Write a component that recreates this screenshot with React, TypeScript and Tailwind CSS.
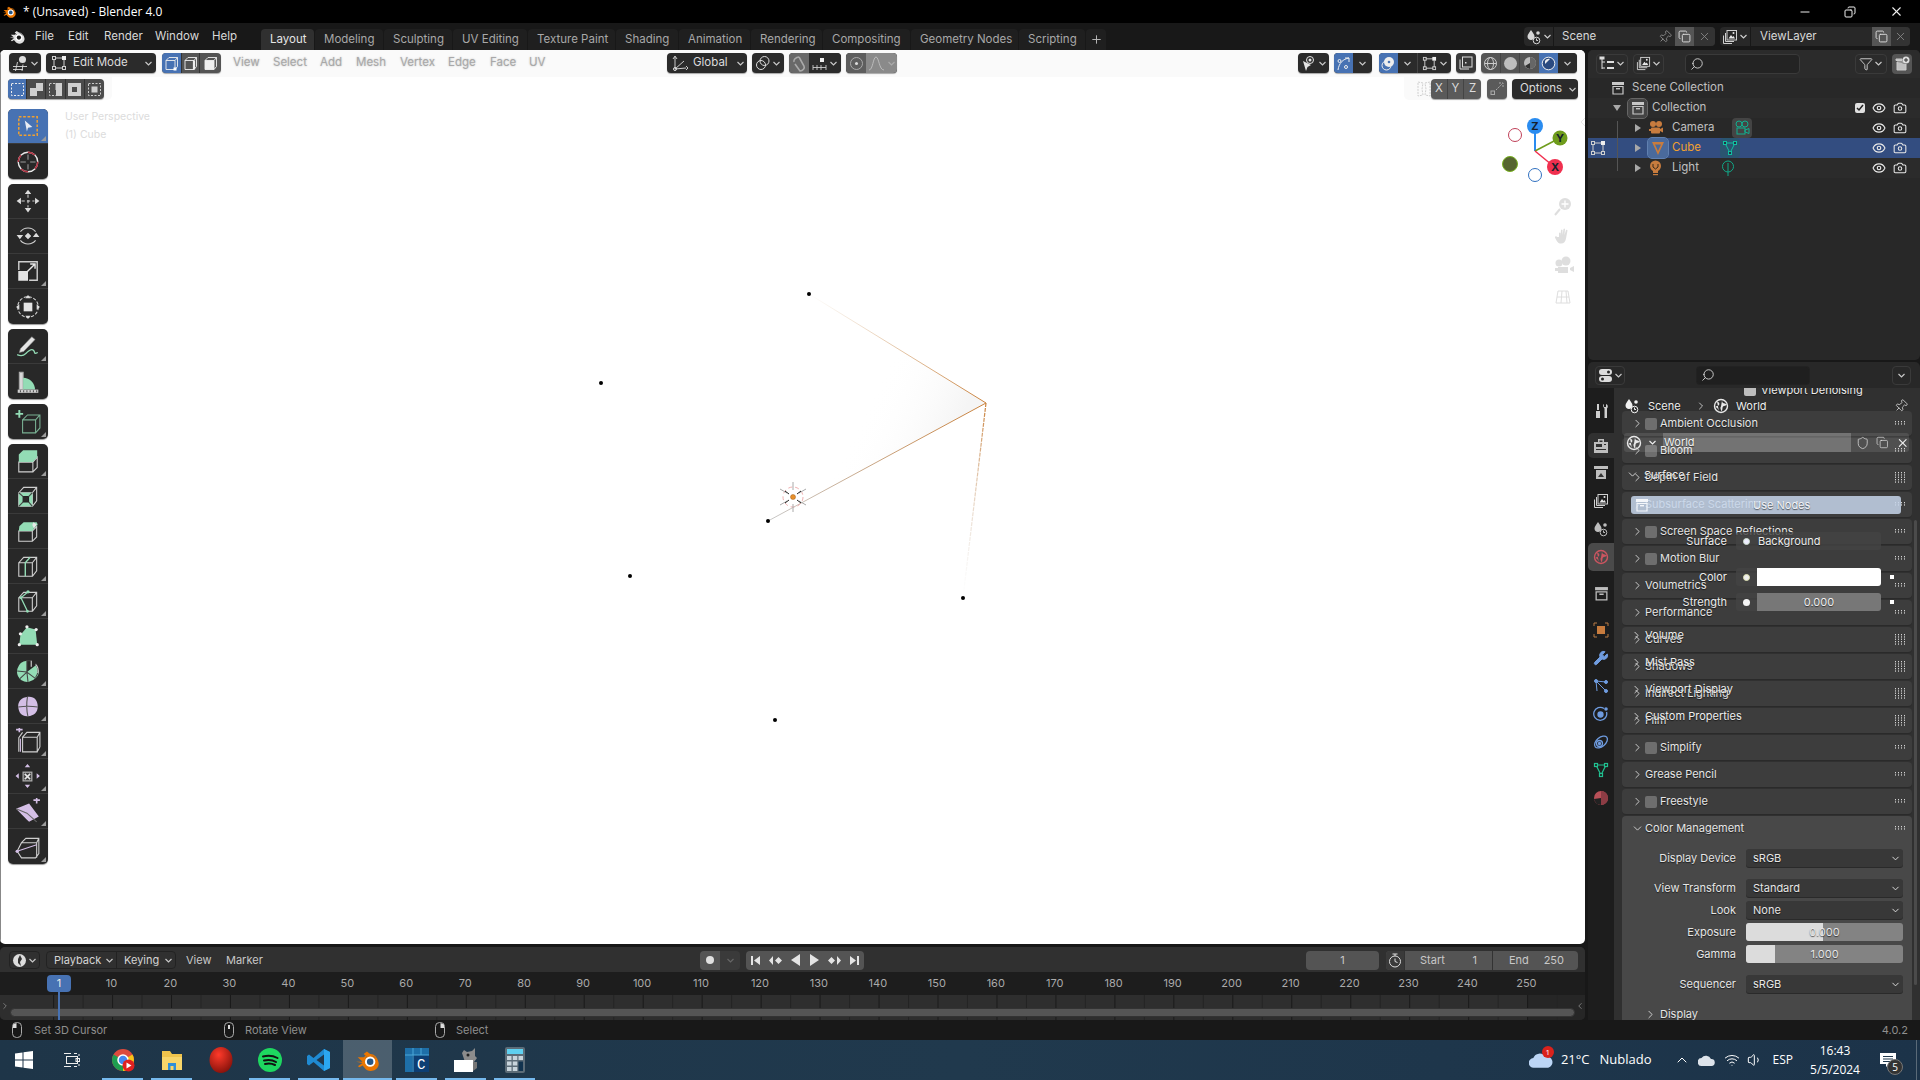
import React from 'react';
import { Camera, ChevronDown, ChevronRight, ChevronUp, Copy, Eye, Filter, Minus, Pin, Plus, Search, Shield, Volume1, Wifi, Wrench, X } from 'lucide-react';

const shadow = '[text-shadow:0_1px_1px_#0009]';

const Chev = ({ className = 'text-[#cfcfcf]' }: { className?: string }) => (
    <svg width="9" height="9" viewBox="0 0 9 9" fill="none" className={`shrink-0 ${className}`}>
        <path d="M1.5 3l3 3 3-3" stroke="currentColor" strokeWidth="1.2" />
    </svg>
);

const BlenderLogo = ({ size = 14, ring = '#ea7600', eye = '#265787', arm = '#ea7600' }: { size?: number; ring?: string; eye?: string; arm?: string }) => (
    <svg width={size} height={size} viewBox="0 0 24 24">
        <path d="M1 13.5h6L2.5 9.5h9L8 6.5l3-2.3 9 6.8c3 3 2.4 7.5-1 9.8-3.5 2.3-8 1.6-10.2-1.6L7 17l-2.8 1.8-1.6-1L7 14.8z" fill={arm} />
        <circle cx="14" cy="13.5" r="4.8" fill="#fff" />
        <circle cx="14" cy="13.5" r="3" fill={eye} />
        <circle cx="14" cy="13.5" r="6.5" fill="none" stroke={ring} strokeWidth="1" />
    </svg>
);

const MeshIcon = ({ size = 16 }: { size?: number }) => (
    <svg width={size} height={size} viewBox="0 0 16 16" fill="none" stroke="#cfcfcf">
        <path d="M4 3h8M3 4v8M13 5v7M4 13h8" />
        <rect x="1.5" y="1.5" width="3" height="3" />
        <rect x="1.5" y="11.5" width="3" height="3" />
        <rect x="11.5" y="11.5" width="3" height="3" />
        <rect x="11" y="1" width="4" height="4" fill="#eee" stroke="none" />
    </svg>
);

const BoxIcon = ({ color = '#c8c8c8', size = 14 }: { color?: string; size?: number }) => (
    <svg width={size} height={size} viewBox="0 0 14 14">
        <rect x="1" y="1" width="12" height="3" fill={color} />
        <path d="M2 5.5h10V13H2z" fill="none" stroke={color} strokeWidth="1.2" />
        <rect x="5" y="7" width="4" height="1.4" fill={color} />
    </svg>
);

const SceneIcon = ({ color = '#d5d5d5' }: { color?: string }) => (
    <svg width="16" height="16" viewBox="0 0 16 16" fill={color}>
        <path d="M5 1c2 3 3.5 4.5 3.5 6.5S7 11 5 11 1.5 9.5 1.5 7.5 3 4 5 1z" />
        <circle cx="12" cy="4" r="1.8" />
        <circle cx="10.5" cy="11.5" r="3.3" fill="none" stroke={color} />
        <path d="M10.5 9.5v2h1.5" fill="none" stroke={color} />
    </svg>
);

const LayerIcon = ({ size = 16 }: { size?: number }) => (
    <svg width={size} height={size} viewBox="0 0 16 16" fill="none" stroke="#d0d0d0">
        <rect x="5" y="1.5" width="9.5" height="9.5" />
        <path d="M3.5 4v8.5H12M1.5 6.5v8H10" />
        <path d="M6.5 9.5l2.5-3.5 1.5 2 1-1 1.5 2.5z" fill="#e8e8e8" stroke="none" />
        <circle cx="11.5" cy="4" r="1" fill="#e8e8e8" stroke="none" />
    </svg>
);

const WorldIcon = ({ color = '#e8e8e8', size = 16 }: { color?: string; size?: number }) => (
    <svg width={size} height={size} viewBox="0 0 16 16">
        <circle cx="8" cy="8" r="6.5" fill="none" stroke={color} strokeWidth="1.4" />
        <path d="M4 3.5c2 .5 3 2 2 3.5S3 7.5 2.5 9c2 1 3 2 3.5 4.5M9 2.5c0 2 1 3 3 3l2 1c-1 1.5-3 1-4 2s0 3-1.5 5C7.5 11 7 9.5 8 8.5" fill={color} />
    </svg>
);

// ---- toolbar drawings ----
const MINT = '#93dcb5';
const LILAC = '#d4bfe6';
const WIRE = '#cfcfcf';
const cube = 'M3.5 9h12.5v12.5H3.5zM3.5 9l4.5-5h12v12.5l-4 5M16 9l4-5';

const Ico = ({ children }: { children: React.ReactNode }) => (
    <svg width="26" height="26" viewBox="0 0 24 24" fill="none" stroke={WIRE} strokeWidth="1">
        {children}
    </svg>
);

const tools: { corner?: boolean; active?: boolean; art: React.ReactNode }[][] = [
    [
        {
            active: true,
            corner: true,
            art: (
                <Ico>
                    <rect x="3.5" y="3.5" width="17" height="17" stroke="#f0a030" strokeWidth="1.4" strokeDasharray="2.5 1.5" />
                    <path d="M9 7l7 6-4 .5-1 3.5z" fill="#e8ecf4" stroke="none" />
                </Ico>
            ),
        },
        {
            art: (
                <Ico>
                    <circle cx="12" cy="12" r="9" stroke="#e8e8e8" strokeWidth="1.3" />
                    <circle cx="12" cy="12" r="9" stroke="#b03040" strokeWidth="1.4" strokeDasharray="7 7" />
                    <path d="M12 5v5M12 14v5M5 12h5M14 12h5" stroke="#999" />
                </Ico>
            ),
        },
    ],
    [
        {
            art: (
                <Ico>
                    <path d="M12 6v12M6 12h12" strokeDasharray="3 2" />
                    <path d="M12 1.5l3 4h-6zM12 22.5l3-4h-6zM1.5 12l4-3v6zM22.5 12l-4-3v6z" fill="#dcdcdc" stroke="none" />
                </Ico>
            ),
        },
        {
            art: (
                <Ico>
                    <path d="M5 8a9 9 0 0 1 14 0M19 16a9 9 0 0 1-14 0" />
                    <path d="M12 9l3 3-3 3-3-3zM1.5 11h6l-3 4zM16.5 13h6l-3-4z" fill="#dcdcdc" stroke="none" />
                </Ico>
            ),
        },
        {
            corner: true,
            art: (
                <Ico>
                    <path d="M3.5 11V3.5h17v17H13" strokeWidth="1.3" />
                    <rect x="3" y="12" width="9" height="9" fill="#e4e4e4" stroke="none" />
                    <path d="M11 13l7-7M14 5.5h4.5V10" stroke="#e8e8e8" strokeWidth="1.3" />
                </Ico>
            ),
        },
        {
            art: (
                <Ico>
                    <circle cx="12" cy="12" r="9.5" strokeDasharray="3 1.5" />
                    <rect x="8" y="8" width="8" height="8" fill="#e4e4e4" stroke="none" />
                    <path d="M12 1l2.5 3h-5zM12 23l2.5-3h-5zM1 12l3-2.5v5zM23 12l-3-2.5v5z" fill="#dcdcdc" stroke="none" />
                </Ico>
            ),
        },
    ],
    [
        {
            corner: true,
            art: (
                <Ico>
                    <path d="M5 14.5L15.5 3.5l3 2.5L8 17l-4 1z" fill="#e4e4e4" stroke="#888" strokeWidth=".6" />
                    <path d="M2 20c4 2 6 1 8-1s5-5 7-3 0 4 4 2" stroke={MINT} strokeWidth="1.2" />
                </Ico>
            ),
        },
        {
            art: (
                <Ico>
                    <path d="M4 19V3h3.5v16" fill="#d8d8d8" stroke="#aaa" />
                    <path d="M7.5 8c6 0 11 5 11 11h-11z" fill={MINT} stroke="none" />
                    <rect x="2.5" y="19" width="19" height="3" fill="#d0d0d0" stroke="none" />
                    <path d="M5 21.5v-2M8 21.5v-2M11 21.5v-2M14 21.5v-2M17 21.5v-2M20 21.5v-2" stroke="#555" />
                </Ico>
            ),
        },
    ],
    [
        {
            corner: true,
            art: (
                <Ico>
                    <path d="M7 10h12v12H7zM7 10l4.5-4.5h11.5v12l-4 4.5M19 10l4-4.5" stroke={MINT} strokeOpacity=".75" />
                    <path d="M4 1v7M.5 4.5h7" stroke={MINT} strokeWidth="1.8" />
                </Ico>
            ),
        },
    ],
    [
        {
            corner: true,
            art: (
                <Ico>
                    <path d="M3.5 13h13v9h-13zM16.5 13l4-4.5v9.5l-4 4" />
                    <path d="M3.5 13V6l4-4h13v6.5l-4 4.5z" fill={MINT} stroke="none" />
                </Ico>
            ),
        },
        {
            art: (
                <Ico>
                    <path d={cube} />
                    <path d="M3.5 9H16v12.5H3.5z" fill={MINT} stroke="none" />
                    <rect x="7.5" y="12.5" width="5" height="5" fill="#2a2a2a" stroke="#222" />
                    <path d="M3.5 9l4 3.5M16 9l-3.5 3.5M3.5 21.5l4-4M16 21.5l-3.5-4" stroke="#444" />
                </Ico>
            ),
        },
        {
            art: (
                <Ico>
                    <path d="M3.5 12H16l4-4v9.5l-4 4H3.5zM16 12v9.5" />
                    <path d="M3.5 12L4 7.5 8 4h12l1 2-3.5 3.5L16 12z" fill={MINT} stroke="none" />
                    <path d="M17 4l3 2-2.5 3.5-1.5-3z" fill="#e8e8e8" stroke="none" />
                </Ico>
            ),
        },
        {
            corner: true,
            art: (
                <Ico>
                    <path d={cube} />
                    <path d="M9.5 21.5V9l4.5-5" stroke={MINT} strokeWidth="1.3" />
                </Ico>
            ),
        },
        {
            corner: true,
            art: (
                <Ico>
                    <path d={cube} />
                    <path d="M5.5 9l6-5 1 0M5.5 9l6 12.5" stroke={MINT} strokeWidth="1.2" />
                    <circle cx="12" cy="3.5" r="1.5" fill={MINT} stroke="none" />
                    <circle cx="5.5" cy="9" r="1.3" fill={MINT} stroke="none" />
                    <circle cx="11.5" cy="21.5" r="1.3" fill={MINT} stroke="none" />
                </Ico>
            ),
        },
        {
            art: (
                <Ico>
                    <path d="M4 20l1-9 6-7 8 2 1.5 14z" fill={MINT} stroke="none" />
                    <circle cx="4" cy="20" r="1.5" fill="#eee" stroke="none" />
                    <circle cx="5" cy="10" r="1.5" fill="#eee" stroke="none" />
                    <circle cx="11" cy="3.5" r="1.5" fill="#eee" stroke="none" />
                    <circle cx="19.5" cy="6" r="1.5" fill="#eee" stroke="none" />
                    <circle cx="20.5" cy="20" r="1.5" fill="#eee" stroke="none" />
                </Ico>
            ),
        },
        {
            corner: true,
            art: (
                <Ico>
                    <path d="M11 13L11 2.5A10 10 0 0 0 6 20.5 10 10 0 0 0 19 18.5c1.5-1 3-3 3-6C21 10 20 8.5 19 7z" fill={MINT} stroke="none" />
                    <path d="M11 13V2.5h4v6M11 13L2 12M11 13L4.5 19M11 13l1 9M11 13l8 6M19 5c3 3 3 9 0 13" stroke="#444" />
                    <path d="M15 2.5V8M19 6c2 2 3 5 2 8" stroke={WIRE} />
                </Ico>
            ),
        },
        {
            corner: true,
            art: (
                <Ico>
                    <path d="M3 13c-.5-5 3-9 9-9.5s9 3.5 9 9-3.5 8.5-9 9-8.5-3-9-8.5z" fill={LILAC} stroke="none" />
                    <path d="M3 13c6-1 12-1 18 0M11.5 3.5c-1 6-1 12 .5 18.500" stroke="#555" />
                </Ico>
            ),
        },
        {
            corner: true,
            art: (
                <Ico>
                    <path d="M7 8.5h13.5v13.5H7zM7 8.5L11 4h12v13.5l-2.5 4.5M20.5 8.5L23 4" />
                    <path d="M3.5 22V9l3.5-5" />
                    <path d="M5 22V10" stroke={LILAC} />
                    <path d="M1 1.5h6M4 -1v5" stroke={LILAC} strokeWidth="1.5" />
                </Ico>
            ),
        },
        {
            corner: true,
            art: (
                <Ico>
                    <rect x="7.5" y="8.5" width="8" height="8" strokeWidth="1.2" stroke="#aaa" fill="#444" />
                    <path d="M9 10l5 5M14 10l-5 5" stroke="#e8e8e8" strokeWidth="1.5" />
                    <path d="M11.5 1l2.5 3h-5zM11.5 23l2.5-3h-5zM.5 12l3-2.5v5zM23 12l-3-2.5v5z" fill={LILAC} stroke="none" />
                </Ico>
            ),
        },
        {
            corner: true,
            art: (
                <Ico>
                    <path d="M1 10l12-5 9 12-9 5-2-2z" fill={LILAC} stroke="none" />
                    <path d="M1 10l10 4 9 8" stroke="#666" />
                    <path d="M17 2h6M20 -1v6" stroke={LILAC} strokeWidth="1.5" />
                </Ico>
            ),
        },
        {
            corner: true,
            art: (
                <Ico>
                    <path d="M6 8l4-4h12v14l-3 4H6l-4-6zM6 8h14v14M20 8l2-4" />
                    <path d="M2 16l18-6" stroke={LILAC} />
                    <circle cx="2" cy="16" r="1.5" fill={LILAC} stroke="none" />
                </Ico>
            ),
        },
    ],
];

const Toolbar = () => (
    <div className="absolute left-[8px] top-[59px] flex w-[40px] flex-col gap-[5px]">
        {tools.map((group, g) => (
            <div key={g} className="flex flex-col overflow-hidden rounded-[5px] bg-[#282828] shadow-[0_1px_1px_#0006]">
                {group.map((tool, i) => (
                    <div
                        key={i}
                        className={`relative flex h-[35px] items-center justify-center border-b border-[#3a3a3a] last:border-b-0 ${tool.active ? 'bg-[#4772b3]' : ''}`}
                    >
                        {tool.art}
                        {tool.corner && (
                            <span className="absolute bottom-[2px] right-[2px] h-0 w-0 border-b-[5px] border-l-[5px] border-b-[#9a9a9a] border-l-transparent" />
                        )}
                    </div>
                ))}
            </div>
        ))}
    </div>
);

// ---- viewport canvas ----
const Scene3D = () => (
    <svg className="absolute inset-0" width="1585" height="894" viewBox="0 50 1585 894">
        <defs>
            <linearGradient id="e1" gradientUnits="userSpaceOnUse" x1="809" y1="294" x2="986" y2="403">
                <stop offset="0" stopColor="#cda070" stopOpacity="0" />
                <stop offset="1" stopColor="#c9803a" />
            </linearGradient>
            <linearGradient id="e2" gradientUnits="userSpaceOnUse" x1="768" y1="521" x2="986" y2="403">
                <stop offset="0" stopColor="#c8c8c8" />
                <stop offset="1" stopColor="#c9803a" />
            </linearGradient>
            <linearGradient id="e3" gradientUnits="userSpaceOnUse" x1="986" y1="403" x2="963" y2="598">
                <stop offset="0" stopColor="#c9803a" />
                <stop offset="1" stopColor="#d8d8d8" stopOpacity="0" />
            </linearGradient>
            <linearGradient id="f1" gradientUnits="userSpaceOnUse" x1="960" y1="420" x2="880" y2="380">
                <stop offset="0" stopColor="#f5f5f5" />
                <stop offset="1" stopColor="#fff" stopOpacity="0" />
            </linearGradient>
        </defs>
        <path d="M986 403L809 294 768 521z" fill="url(#f1)" />
        <path d="M809 294L986 403" stroke="url(#e1)" />
        <path d="M768 521L986 403" stroke="url(#e2)" />
        <path d="M986 403L963 598" stroke="url(#e3)" strokeDasharray="4 1" strokeWidth="1.2" />
        {[
            [809, 294],
            [601, 383],
            [768, 521],
            [630, 576],
            [963, 598],
            [775, 720],
        ].map(([x, y]) => (
            <circle key={x} cx={x} cy={y} r="2" fill="#000" />
        ))}
        {/* 3D cursor */}
        <circle cx="793" cy="497" r="10" fill="none" stroke="#f0b0b0" strokeDasharray="4 3" />
        <path d="M793 482v8M793 504v8M780 489l7 4M799 501l7 4M780 505l7-4M799 493l7-4" stroke="#aaa" />
        <path d="M785 491l4 3M797 500l4 3M785 503l4-3M797 494l4-3" stroke="#222" />
        <circle cx="793" cy="497" r="2.5" fill="#e8902a" stroke="#a06020" strokeWidth=".5" />
        {/* navigation gizmo */}
        <path d="M1535 151V130" stroke="#2a8cf0" strokeWidth="2" />
        <path d="M1535 151L1556 140" stroke="#6f9c1c" strokeWidth="1.5" />
        <path d="M1535 151L1552 165" stroke="#f0304f" strokeWidth="1.5" />
        <circle cx="1515" cy="135" r="6.5" fill="#fff" stroke="#c04058" />
        <circle cx="1510" cy="164" r="7.5" fill="#566530" stroke="#78b020" />
        <circle cx="1535" cy="175" r="6.5" fill="#fff" stroke="#3070c0" />
        <circle cx="1535" cy="126" r="8" fill="#2a8cf0" />
        <circle cx="1560" cy="138" r="7.5" fill="#6f9c1c" />
        <circle cx="1555" cy="167" r="8" fill="#f0304f" />
        <g fontFamily="Inter" fontSize="11" fontWeight="700" fill="#16202c" textAnchor="middle">
            <text x="1535" y="130">Z</text>
            <text x="1560" y="142">Y</text>
            <text x="1555" y="171">X</text>
        </g>
        <path d="M1585 118l-4 4 4 4" fill="none" stroke="#e8e8e8" strokeWidth="1" />
        {/* zoom / pan / camera / ortho */}
        <g fill="#dedede" stroke="#dedede">
            <circle cx="1565" cy="204" r="6" stroke="none" />
            <path d="M1560 209l-5 6" strokeWidth="2" fill="none" />
            <path d="M1565 200.5v7M1561.5 204h7" stroke="#fff" strokeWidth="1.3" fill="none" />
            <path transform="translate(1 3)" d="M1558 234v-4a1 1 0 0 1 1.5 0v3l.5-6a1 1 0 0 1 1.5 0v5l1-6a1 1 0 0 1 1.5 0l-.5 6 1.5-5a1 1 0 0 1 1.5.5l-1.5 8c-.5 3-2 5-5 5s-4-2-6-6a1 1 0 0 1 2-.5z" stroke="none" />
            <circle cx="1559" cy="263" r="3.5" stroke="none" />
            <circle cx="1566" cy="261" r="4.5" stroke="none" />
            <rect x="1558" y="267" width="10" height="6" stroke="none" />
            <path d="M1570 268l4-2v6l-4-2zM1555 268h3v3h-3z" stroke="none" />
            <path d="M1558 291h10l2 12h-14zM1562 291l-1 12M1566 291l1 12M1557 297h12" fill="none" strokeWidth="1" />
        </g>
    </svg>
);

// ---- top bars ----
const menus = [
    { t: 'File', c: 'w-[33px]' },
    { t: 'Edit', c: 'w-[36px]' },
    { t: 'Render', c: 'w-[51px]' },
    { t: 'Window', c: 'w-[57px]' },
    { t: 'Help', c: 'w-[49px]' },
];

const workspaces = [
    { t: 'Layout', c: 'w-[53px] bg-[#303030] text-[#e6e6e6]' },
    { t: 'Modeling', c: 'w-[68px]' },
    { t: 'Sculpting', c: 'w-[68px]' },
    { t: 'UV Editing', c: 'w-[74px]' },
    { t: 'Texture Paint', c: 'w-[87px]' },
    { t: 'Shading', c: 'w-[62px]' },
    { t: 'Animation', c: 'w-[71px]' },
    { t: 'Rendering', c: 'w-[71px]' },
    { t: 'Compositing', c: 'w-[87px]' },
    { t: 'Geometry Nodes', c: 'w-[107px]' },
    { t: 'Scripting', c: 'w-[66px]' },
];

const TitleBar = () => (
    <div className="flex h-[23px] shrink-0 items-center bg-black font-['Open_Sans',sans-serif] text-[12px] text-white">
        <span className="ml-[2px] flex w-[21px]">
            <BlenderLogo size={15} />
        </span>
        <span>* (Unsaved) - Blender 4.0</span>
        <div className="ml-auto flex items-center text-[#f0f0f0]">
            <span className="flex w-[45px] justify-center"><Minus size={14} strokeWidth={1.7} /></span>
            <span className="flex w-[45px] justify-center">
                <Copy size={12} strokeWidth={2} className="-scale-x-100" />
            </span>
            <span className="flex w-[48px] justify-center"><X size={15} strokeWidth={1.7} /></span>
        </div>
    </div>
);

const SmallBtn = ({ className = '', children }: { className?: string; children: React.ReactNode }) => (
    <span className={`flex h-full items-center justify-center ${className}`}>{children}</span>
);

const TopBar = () => (
    <div className="flex h-[27px] shrink-0 bg-[#181818] font-['Inter',sans-serif] text-[11.5px]">
        <div className="flex w-[261px] items-center pl-[9px] text-[#d8d8d8]">
            <span className="mr-[9px] flex w-[17px]">
                <BlenderLogo size={17} ring="#e0e0e0" eye="#181818" arm="#e0e0e0" />
            </span>
            {menus.map((m) => (
                <span key={m.t} className={m.c}>{m.t}</span>
            ))}
        </div>
        <div className="flex items-end">
            {workspaces.map((w) => (
                <span
                    key={w.t}
                    className={`mr-px flex h-[21px] items-center justify-start rounded-t-[4px] pl-[9px] ${w.c.includes('bg-') ? w.c : `${w.c} bg-[#1f1f1f] text-[#a8a8a8]`}`}
                >
                    {w.t}
                </span>
            ))}
            <span className="flex h-[21px] w-[20px] items-center justify-center rounded-t-[4px] bg-[#1f1f1f] text-[#b8b8b8]">
                <Plus size={13} strokeWidth={1.8} />
            </span>
        </div>
        <div className="ml-auto flex items-center gap-[5px] pr-[10px]">
            <div className="flex h-[19px] w-[191px] items-center overflow-hidden rounded-[4px] bg-[#282828] text-[#d8d8d8]">
                <SmallBtn className="w-[30px] gap-px border-r border-[#181818]"><SceneIcon /><Chev /></SmallBtn>
                <span className="ml-[8px] flex-1">Scene</span>
                <Pin size={14} strokeWidth={1.6} className="mr-[3px] rotate-45 text-[#888]" />
                <SmallBtn className="w-[19px] bg-[#555]"><Copy size={13} strokeWidth={1.8} /></SmallBtn>
                <SmallBtn className="w-[21px] bg-[#333] text-[#888]"><X size={13} strokeWidth={1.6} /></SmallBtn>
            </div>
            <div className="flex h-[19px] w-[190px] items-center overflow-hidden rounded-[4px] bg-[#282828] text-[#d8d8d8]">
                <SmallBtn className="w-[31px] gap-px border-r border-[#181818]"><LayerIcon /><Chev /></SmallBtn>
                <span className="ml-[9px] flex-1">ViewLayer</span>
                <SmallBtn className="w-[19px] bg-[#555]"><Copy size={13} strokeWidth={1.8} /></SmallBtn>
                <SmallBtn className="w-[19px] bg-[#333] text-[#888]"><X size={13} strokeWidth={1.6} /></SmallBtn>
            </div>
        </div>
    </div>
);

// ---- viewport header ----
const Dark = ({ className = '', children }: { className?: string; children?: React.ReactNode }) => (
    <div className={`flex h-[20px] items-center overflow-hidden rounded-[4px] bg-[#2b2b2b] text-[#dcdcdc] shadow-[0_1px_1px_#0005] ${className}`}>
        {children}
    </div>
);

const vmenus = [
    { t: 'View', c: 'w-[40px]' },
    { t: 'Select', c: 'w-[47px]' },
    { t: 'Add', c: 'w-[36px]' },
    { t: 'Mesh', c: 'w-[44px]' },
    { t: 'Vertex', c: 'w-[48px]' },
    { t: 'Edge', c: 'w-[42px]' },
    { t: 'Face', c: 'w-[39px]' },
    { t: 'UV', c: 'w-[138px]' },
];

const SelectCube = ({ mode }: { mode: 0 | 1 | 2 }) => (
    <svg width="15" height="15" viewBox="0 0 15 15" fill="none" stroke="#eee">
        <path d="M2 4.5h9v9H2zM2 4.5L5 1.5h8.5v9l-2.5 3M11 4.5l2.5-3" strokeWidth=".9" />
        {mode === 0 && <rect x="9.5" y="11.5" width="3" height="3" fill="#fff" stroke="none" />}
        {mode === 1 && <path d="M11 4.5v9" strokeWidth="2.2" />}
        {mode === 2 && <rect x="2" y="4.5" width="9" height="9" fill="#eee" stroke="none" />}
    </svg>
);

const Caret = () => <Chev className="text-[#c8c8c8]" />;

const ViewportHeader = () => (
    <div className="flex h-[27px] shrink-0 items-start rounded-t-[5px] bg-[#fafafa] pl-[9px] pr-[8px] pt-[3px] font-['Inter',sans-serif] text-[11.5px]">
        <Dark className="w-[32px] justify-center gap-px">
            <svg width="17" height="17" viewBox="0 0 17 17" fill="none" stroke="#ddd">
                <path d="M1 11.5h14M1 14.5h10M5.5 7l-2 9M11 9.5l-1 6.5" strokeWidth=".9" />
                <circle cx="10.5" cy="4.5" r="3.5" fill="#ddd" stroke="none" />
            </svg>
            <Caret />
        </Dark>
        <Dark className="ml-[5px] w-[110px] pl-[5px]">
            <MeshIcon />
            <span className="ml-[6px] flex-1">Edit Mode</span>
            <span className="mr-[3px]"><Caret /></span>
        </Dark>
        <Dark className="ml-[6px] w-[59px] bg-[#545454]">
            <SmallBtn className="w-[19px] bg-[#4772b3]"><SelectCube mode={0} /></SmallBtn>
            <SmallBtn className="w-[19px] border-x border-[#333]"><SelectCube mode={1} /></SmallBtn>
            <SmallBtn className="w-[21px]"><SelectCube mode={2} /></SmallBtn>
        </Dark>
        <div className="ml-[12px] flex h-[20px] items-center text-[#a8a8a8] [text-shadow:0_0_2px_#bbb]">
            {vmenus.map((m) => (
                <span key={m.t} className={m.c}>{m.t}</span>
            ))}
        </div>
        <Dark className="w-[80px] pl-[4px]">
            <svg width="18" height="16" viewBox="0 0 18 16" fill="none" stroke="#ddd">
                <path d="M4 14V2M4 14l11-1M4 14L13 6M2 4l2-3 2 3M15 11l2 2-2 2" strokeWidth=".9" />
                <circle cx="4" cy="14" r="1.5" />
            </svg>
            <span className="ml-[4px] flex-1">Global</span>
            <span className="mr-[2px]"><Caret /></span>
        </Dark>
        <Dark className="ml-[5px] w-[32px] justify-center gap-px">
            <svg width="16" height="16" viewBox="0 0 16 16" fill="none" stroke="#ddd">
                <circle cx="9.5" cy="6" r="4.5" />
                <circle cx="6" cy="10" r="4.5" />
            </svg>
            <Caret />
        </Dark>
        <Dark className="ml-[5px] w-[52px]">
            <SmallBtn className="w-[20px] bg-[#696969]">
                <svg width="15" height="17" viewBox="0 0 15 17" fill="none" stroke="#aaa" strokeWidth="1.6">
                    <path d="M3 9l5 7c3 0 5-3 4-5L7 2M7 2C4 2 1 5 2 7" />
                </svg>
            </SmallBtn>
            <SmallBtn className="flex-1 gap-[2px] bg-[#2b2b2b]">
                <svg width="15" height="15" viewBox="0 0 15 15" stroke="#ccc" fill="none">
                    <path d="M1 9v5M5 9v5M9 9v5M14 9v5M1 11.5h13" strokeWidth=".9" />
                    <rect x="8" y="2" width="4" height="4" fill="#eee" stroke="none" />
                </svg>
                <Caret />
            </SmallBtn>
        </Dark>
        <Dark className="ml-[5px] w-[51px]">
            <SmallBtn className="w-[20px] bg-[#5e5e5e]">
                <svg width="15" height="15" viewBox="0 0 15 15" fill="none" stroke="#aaa">
                    <circle cx="7.5" cy="7.5" r="6" />
                    <circle cx="7.5" cy="7.5" r="1.5" fill="#ddd" stroke="none" />
                </svg>
            </SmallBtn>
            <SmallBtn className="flex-1 justify-start gap-[2px] bg-[#8a8a8a] pl-[2px]">
                <svg width="17" height="16" viewBox="0 0 17 16" fill="none" stroke="#bbb">
                    <path d="M1 15c4 0 4-13 7-13s3 13 8 13" />
                </svg>
                <Chev className="text-[#aaa]" />
            </SmallBtn>
        </Dark>
        <div className="ml-auto flex items-center">
            <Dark className="w-[31px] justify-center gap-px">
                <svg width="16" height="16" viewBox="0 0 16 16" fill="#e4e4e4">
                    <circle cx="9" cy="5" r="3.5" fill="none" stroke="#e4e4e4" />
                    <circle cx="9" cy="5" r="1.5" />
                    <path d="M2 6l3 10 1.5-4L10 10z" />
                </svg>
                <Caret />
            </Dark>
            <Dark className="ml-[5px] w-[38px]">
                <SmallBtn className="w-[19px] bg-[#4772b3]">
                    <svg width="15" height="15" viewBox="0 0 15 15" fill="none" stroke="#eee">
                        <path d="M2 14C3 7 7 3 13 2M9 2h4v4" />
                        <circle cx="3.5" cy="5" r="1.5" />
                        <circle cx="10" cy="11" r="1.5" />
                    </svg>
                </SmallBtn>
                <SmallBtn className="flex-1"><Caret /></SmallBtn>
            </Dark>
            <Dark className="ml-[7px] w-[72px]">
                <SmallBtn className="w-[19px] bg-[#4772b3]">
                    <svg width="15" height="15" viewBox="0 0 15 15" fill="none" stroke="#eee">
                        <circle cx="8" cy="6" r="5" fill="#eee" stroke="none" />
                        <circle cx="5.5" cy="9.5" r="4.5" />
                        <circle cx="8" cy="6" r="1.3" fill="#4772b3" stroke="none" />
                    </svg>
                </SmallBtn>
                <SmallBtn className="w-[20px] border-r border-[#444]"><Caret /></SmallBtn>
                <SmallBtn className="flex-1 gap-[2px]"><MeshIcon size={15} /><Caret /></SmallBtn>
            </Dark>
            <Dark className="ml-[5px] w-[20px] justify-center bg-[#383838]">
                <svg width="14" height="14" viewBox="0 0 14 14" fill="none" stroke="#ddd">
                    <rect x="3.5" y="1" width="9.5" height="10" />
                    <path d="M1 3.5V13h9" />
                    <rect x="6" y="6" width="1.5" height="1.5" fill="#ddd" stroke="none" />
                </svg>
            </Dark>
            <Dark className="ml-[5px] w-[96px] bg-[#545454]">
                <SmallBtn className="w-[19px]">
                    <svg width="15" height="15" viewBox="0 0 15 15" fill="none" stroke="#ccc">
                        <circle cx="7.5" cy="7.5" r="6" />
                        <ellipse cx="7.5" cy="7.5" rx="3" ry="6" />
                        <path d="M1.5 7.5h12" />
                    </svg>
                </SmallBtn>
                <SmallBtn className="w-[20px] border-x border-[#444]">
                    <span className="h-[13px] w-[13px] rounded-full bg-[#bdbdbd]" />
                </SmallBtn>
                <SmallBtn className="w-[19px]">
                    <svg width="14" height="14" viewBox="0 0 14 14">
                        <circle cx="7" cy="7" r="6" fill="#bdbdbd" />
                        <path d="M7 7V1a6 6 0 0 1 0 12z" fill="#666" />
                        <path d="M7 7l-5 3a6 6 0 0 0 5 3z" fill="#333" />
                    </svg>
                </SmallBtn>
                <SmallBtn className="w-[19px] bg-[#4772b3]">
                    <svg width="15" height="15" viewBox="0 0 15 15">
                        <circle cx="7.5" cy="7.5" r="6.3" fill="#2a4a80" stroke="#eee" />
                        <path d="M4 5c1-2 3-2.5 5-2L4 8z" fill="#eee" />
                    </svg>
                </SmallBtn>
                <SmallBtn className="flex-1 bg-[#2b2b2b]"><Caret /></SmallBtn>
            </Dark>
        </div>
    </div>
);

const SelModeIcon = ({ kind }: { kind: number }) => (
    <svg width="15" height="15" viewBox="0 0 15 15">
        {kind === 0 && <rect x="1.5" y="1.5" width="12" height="12" fill="none" stroke="#eee" strokeDasharray="2 1.5" />}
        {kind === 1 && <path d="M1 6h6V1h7v8H8v5H1z" fill="#cfcfcf" />}
        {kind === 2 && (
            <>
                <rect x="1.5" y="1.5" width="12" height="12" fill="none" stroke="#ccc" strokeDasharray="2 1.5" />
                <path d="M7.5 1h6.5v13H8V8H7.5z" fill="#cfcfcf" />
            </>
        )}
        {kind === 3 && <path d="M1 1h13v13H1zM5 5v5h5V5z" fill="#cfcfcf" fillRule="evenodd" />}
        {kind === 4 && (
            <>
                <rect x="1.5" y="1.5" width="12" height="12" fill="none" stroke="#ccc" strokeDasharray="2 1.5" />
                <rect x="4.5" y="4.5" width="6" height="6" fill="#cfcfcf" />
            </>
        )}
    </svg>
);

const ToolSettings = () => (
    <div className="flex h-[23px] shrink-0 justify-between font-['Inter',sans-serif] text-[11.5px]">
        <div className="flex w-[112px] items-start rounded-br-[5px] bg-[#fafafa] pl-[8px] pt-[2px]">
            <Dark className="w-[96px] bg-[#4c4c4c]">
                {[0, 1, 2, 3, 4].map((k) => (
                    <SmallBtn key={k} className={`w-[19.2px] border-r border-[#333] last:border-r-0 ${k === 0 ? 'bg-[#4772b3]' : ''}`}>
                        <SelModeIcon kind={k} />
                    </SmallBtn>
                ))}
            </Dark>
        </div>
        <div className="flex w-[181px] items-start rounded-bl-[5px] bg-[#fafafa] pl-[12px] pt-[2px]">
            <svg width="16" height="16" viewBox="0 0 16 16" fill="none" stroke="#cfcfcf" strokeDasharray="2 1" className="mt-[2px] shrink-0">
                <path d="M7 2L2 1v14l5-1-1-6zM9 2l5-1v14l-5-1 1-6z" />
            </svg>
            <Dark className="ml-[-1px] w-[50px] bg-[#5a5a5a] text-[#d8d8d8]">
                <SmallBtn className="w-1/3 border-r border-[#444]">X</SmallBtn>
                <SmallBtn className="w-1/3 border-r border-[#444]">Y</SmallBtn>
                <SmallBtn className="w-1/3">Z</SmallBtn>
            </Dark>
            <Dark className="ml-[6px] w-[20px] justify-center bg-[#5a5a5a]">
                <svg width="14" height="14" viewBox="0 0 14 14" fill="none" stroke="#aaa">
                    <rect x="1" y="9" width="3.5" height="3.5" />
                    <path d="M9 1h4v4M6 8l6-6" strokeDasharray="2 1" />
                </svg>
            </Dark>
            <Dark className="ml-[5px] w-[66px] pl-[8px]">
                <span className="flex-1">Options</span>
                <span className="mr-[1px]"><Caret /></span>
            </Dark>
        </div>
    </div>
);

// ---- timeline ----
const frames = Array.from({ length: 25 }, (_, i) => (i + 1) * 10);
const ticks = Array.from({ length: 56 }, (_, i) => i * 5);
const frameX = (f: number) => 59 + (f - 1) * 5.896;

const Transport = () => (
    <div className="flex h-[19px] w-[118px] items-center justify-between rounded-[4px] bg-[#545454] px-[4px] text-[#e4e4e4]">
        <svg width="11" height="11" viewBox="0 0 11 11" fill="currentColor"><path d="M1 1h2v9H1zM10 1v9L4 5.5z" /></svg>
        <svg width="14" height="11" viewBox="0 0 14 11" fill="currentColor"><path d="M4 1v9L0 5.5zM9.5 2l3.5 3.5L9.5 9 6 5.5z" /></svg>
        <svg width="11" height="12" viewBox="0 0 11 12" fill="currentColor"><path d="M10 0v12L1 6z" /></svg>
        <svg width="11" height="12" viewBox="0 0 11 12" fill="currentColor"><path d="M1 0v12l9-6z" /></svg>
        <svg width="14" height="11" viewBox="0 0 14 11" fill="currentColor"><path d="M10 1v9l4-4.5zM4.5 2L1 5.5 4.5 9 8 5.5z" /></svg>
        <svg width="11" height="11" viewBox="0 0 11 11" fill="currentColor"><path d="M10 1H8v9h2zM1 1v9l6-4.5z" /></svg>
    </div>
);

const Timeline = () => (
    <div className="relative mt-[3px] flex h-[73px] shrink-0 flex-col overflow-hidden rounded-[5px] bg-[#2a2a2a] font-['Inter',sans-serif] text-[11px] text-[#c8c8c8]">
        <div className="flex h-[25px] shrink-0 items-center bg-[#303030] pl-[9px] pr-[7px] pt-px">
            <div className="flex h-[18px] w-[31px] items-center justify-center gap-px rounded-[4px] border border-[#222]">
                <svg width="15" height="15" viewBox="0 0 15 15">
                    <circle cx="7.5" cy="7.5" r="6.5" fill="#ddd" />
                    <path d="M8 2l2 4-2 3 1 4-3-3V6z" fill="#333" />
                </svg>
                <Caret />
            </div>
            <div className="ml-[6px] flex h-[18px] w-[130px] items-center rounded-[4px] border border-[#222] text-[#d4d4d4]">
                <span className="flex h-full w-[70px] items-center justify-between border-r border-[#222] pl-[7px] pr-[2px]">Playback <Caret /></span>
                <span className="flex h-full flex-1 items-center justify-between pl-[7px] pr-[2px]">Keying <Caret /></span>
            </div>
            <span className="ml-[10px] w-[40px]">View</span>
            <span className="w-[40px]">Marker</span>
            <div className="ml-[434px] flex h-[19px] w-[40px] items-center overflow-hidden rounded-[4px]">
                <SmallBtn className="w-[20px] bg-[#545454]"><span className="h-[8px] w-[8px] rounded-full bg-[#e0e0e0]" /></SmallBtn>
                <SmallBtn className="flex-1 bg-[#3a3a3a]"><Chev className="text-[#666]" /></SmallBtn>
            </div>
            <div className="ml-[6px]"><Transport /></div>
            <div className="ml-[442px] flex h-[19px] w-[73px] items-center justify-center rounded-[4px] bg-[#545454]">1</div>
            <div className="ml-[7px] flex h-[19px] w-[192px] items-center overflow-hidden rounded-[4px] bg-[#545454]">
                <SmallBtn className="w-[19px] border-r border-[#333] bg-[#3a3a3a]">
                    <svg width="14" height="15" viewBox="0 0 14 15" fill="none" stroke="#ddd">
                        <circle cx="7" cy="8.5" r="5.5" />
                        <path d="M4.5 1h5M7 1v2M7 5.5v3l2.5 1" />
                    </svg>
                </SmallBtn>
                <span className="flex h-full w-[88px] items-center justify-between border-r border-[#333] px-[15px]"><span>Start</span><span>1</span></span>
                <span className="flex flex-1 items-center justify-between pl-[16px] pr-[14px]"><span>End</span><span>250</span></span>
            </div>
        </div>
        <div className="flex h-[23px] shrink-0 items-center bg-[#1d1d1d] pl-[82px] text-[11px] text-[#aaa]">
            {frames.map((f) => (
                <span key={f} className="w-[58.96px] shrink-0 text-center">{f}</span>
            ))}
        </div>
        <div className="flex-1 overflow-hidden">
            <svg width="1585" height="25" className="block">
                <rect width="1527" height="25" fill="#2e2e2e" />
                <rect x="1527" width="58" height="25" fill="#262626" />
                {ticks.map((t) => (
                    <path key={t} d={`M${frameX(t) + 0.5} 0V25`} stroke={t % 10 === 0 ? '#1a1a1a' : '#242424'} />
                ))}
            </svg>
        </div>
        {/* overlays: scrollbar, playhead */}
        <div className="absolute bottom-[3px] left-[10px] right-[10px] h-[9px] rounded-full border border-[#333] bg-[#555]" />
        <div className="absolute bottom-0 left-[58px] top-[45px] w-[2px] bg-[#4772b3]" />
        <div className="absolute left-[47px] top-[28px] flex h-[17px] w-[24px] items-center justify-center rounded-[4px] bg-[#4772b3] text-[11px] text-[#e8e8e8]">1</div>
        <span className="absolute left-0 top-[54px] text-[#888]"><ChevronRight size={10} /></span>
        <span className="absolute right-0 top-[54px] text-[#888]"><ChevronRight size={10} className="rotate-180" /></span>
    </div>
);

// ---- outliner ----
const Eyes = ({ check }: { check?: boolean }) => (
    <div className="ml-auto flex items-center pr-[13px] text-[#e8e8e8]">
        {check && (
            <span className="mr-[7px] flex h-[10px] w-[10px] items-center justify-center rounded-[2px] bg-[#e0e0e0]">
                <svg width="8" height="8" viewBox="0 0 8 8" fill="none" stroke="#222" strokeWidth="1.5"><path d="M1 4l2 2 4-5" /></svg>
            </span>
        )}
        <Eye size={14} strokeWidth={2} className="mr-[7px]" />
        <Camera size={14} strokeWidth={1.8} />
    </div>
);

const Tri = ({ open }: { open?: boolean }) => (
    <span className={`h-0 w-0 border-y-[4px] border-l-[6px] border-y-transparent border-l-[#a8a8a8] ${open ? 'rotate-90' : ''}`} />
);

const CamObj = () => (
    <svg width="16" height="16" viewBox="0 0 16 16" fill="#c87c3e">
        <circle cx="5" cy="4" r="3" />
        <circle cx="11" cy="4" r="3" />
        <rect x="3" y="7.5" width="9" height="6" rx="1" />
        <path d="M12 9l3-1.5v5L12 11zM1 9h2v2H1z" />
    </svg>
);

const BulbObj = () => (
    <svg width="15" height="17" viewBox="0 0 15 17">
        <circle cx="7.5" cy="6" r="5.5" fill="#c87c3e" />
        <rect x="5" y="11" width="5" height="2" fill="#c87c3e" />
        <rect x="5" y="14" width="5" height="1.2" fill="#c87c3e" />
        <path d="M5 4v3l2.5 2 2.5-2V4" stroke="#3a2a1a" fill="none" />
    </svg>
);

const Outliner = () => (
    <div className="h-[310px] shrink-0 overflow-hidden rounded-[5px] bg-[#282828] font-['Inter',sans-serif] text-[11.5px] text-[#c0c0c0]">
        <div className="flex h-[28px] items-center bg-[#2b2b2b] pb-px pl-[8px] pr-[8px]">
            <div className="flex h-[20px] w-[32px] items-center justify-center gap-px rounded-[4px] border border-[#3a3a3a]">
                <svg width="16" height="16" viewBox="0 0 16 16" fill="none" stroke="#ddd">
                    <path d="M3 1v12M3 6h3M3 12h3" />
                    <rect x="1" y="1" width="4" height="2" fill="#ddd" />
                    <rect x="8" y="5" width="7" height="2" fill="#ddd" stroke="none" />
                    <rect x="8" y="11" width="7" height="2" fill="#ddd" stroke="none" />
                </svg>
                <Caret />
            </div>
            <div className="ml-[5px] flex h-[20px] w-[31px] items-center justify-center gap-px rounded-[4px] border border-[#3a3a3a]">
                <LayerIcon size={15} /><Caret />
            </div>
            <div className="ml-[21px] flex h-[20px] w-[115px] items-center rounded-[4px] border border-[#3a3a3a] bg-[#232323] pl-[4px] text-[#ddd]">
                <Search size={14} strokeWidth={1.5} className="-scale-x-100" />
            </div>
            <div className="ml-auto flex h-[20px] w-[32px] items-center justify-center gap-px rounded-[4px] border border-[#3a3a3a] text-[#ddd]">
                <Filter size={14} strokeWidth={1.5} /><Caret />
            </div>
            <div className="ml-[5px] flex h-[20px] w-[20px] items-center justify-center rounded-[4px] bg-[#555]">
                <svg width="15" height="15" viewBox="0 0 15 15">
                    <path d="M1 3h6v1.5H1zM2 6h6M2 6v8h9V8" fill="#ccc" stroke="#ccc" fillOpacity=".9" />
                    <circle cx="11" cy="4" r="3.5" fill="#ddd" />
                    <path d="M11 2v4M9 4h4" stroke="#333" />
                </svg>
            </div>
        </div>
        <div className="relative">
            <div className="flex h-[20px] items-center bg-[#282828] pl-[23px]">
                <BoxIcon />
                <span className="ml-[7px]">Scene Collection</span>
            </div>
            <div className="flex h-[20px] items-center bg-[#2b2b2b] pl-[26px]">
                <Tri open />
                <span className="ml-[8px] flex h-[19px] w-[19px] items-center justify-center rounded-[4px] bg-[#444] outline outline-[#666]">
                    <BoxIcon />
                </span>
                <span className="ml-[5px]">Collection</span>
                <Eyes check />
            </div>
            <div className="flex h-[20px] items-center bg-[#282828] pl-[47px]">
                <Tri />
                <span className="ml-[6px] flex w-[17px] justify-center"><CamObj /></span>
                <span className="ml-[8px] w-[55px]">Camera</span>
                <span className="ml-[5px] flex h-[20px] w-[20px] items-center justify-center rounded-[4px] bg-[#444]">
                    <svg width="16" height="16" viewBox="0 0 16 16" fill="none" stroke="#10b090">
                        <circle cx="5" cy="4" r="3" />
                        <circle cx="11" cy="4" r="3" />
                        <rect x="3" y="8" width="8" height="6" />
                        <path d="M11 10l4-1.5v5L11 12z" />
                    </svg>
                </span>
                <Eyes />
            </div>
            <div className="flex h-[20px] items-center bg-[#334d80] pl-[47px] text-[#f0a030]">
                <Tri />
                <span className="ml-[7px] flex h-[20px] w-[20px] items-center justify-center rounded-[4px] bg-[#4a6a9c] outline outline-[#6080b0]">
                    <svg width="14" height="14" viewBox="0 0 14 14" fill="#c87c3e">
                        <path d="M1 1h12L7 14zM4 3.5l3 6.5 3-6.5z" fillRule="evenodd" />
                    </svg>
                </span>
                <span className="ml-[4px] w-[37px]">Cube</span>
                <span className="ml-[11px] flex h-[20px] w-[20px] items-center justify-center rounded-[4px] bg-[#2a5570]">
                    <svg width="16" height="16" viewBox="0 0 16 16" fill="none" stroke="#10c0a0">
                        <path d="M3 3h10L8 13z" />
                        <rect x="1.5" y="1.5" width="3" height="3" fill="#234" />
                        <rect x="11.5" y="1.5" width="3" height="3" fill="#234" />
                        <rect x="6.5" y="11.5" width="3" height="3" fill="#234" />
                    </svg>
                </span>
                <Eyes />
            </div>
            <div className="flex h-[20px] items-center bg-[#2b2b2b] pl-[47px]">
                <Tri />
                <span className="ml-[6px] flex w-[17px] justify-center"><BulbObj /></span>
                <span className="ml-[8px] w-[37px]">Light</span>
                <span className="ml-[9px] flex w-[20px] justify-center">
                    <svg width="14" height="17" viewBox="0 0 14 17" fill="none" stroke="#10a888">
                        <circle cx="7" cy="6.5" r="5.5" />
                        <path d="M7 3v13" />
                    </svg>
                </span>
                <Eyes />
            </div>
            {/* mode column + hierarchy line lie over the rows */}
            <div className="absolute left-0 top-[60px] flex h-[20px] w-[20px] items-center justify-center bg-[#334d80]"><MeshIcon /></div>
            <div className="absolute left-[29px] top-[43px] h-[50px] w-px bg-[#555]" />
        </div>
    </div>
);

// ---- properties ----
const Grip = ({ tall }: { tall?: boolean }) => (
    <svg width="10" height={tall ? 11 : 6} viewBox={tall ? '0 0 10 11' : '0 0 10 6'} fill="#d4d4d4" className="ml-auto mr-[7px] shrink-0">
        {[0, 3, 6, 9].map((x) => (
            <React.Fragment key={x}>
                <rect x={x} y="0" width="1" height="1.3" />
                <rect x={x} y="2.3" width="1" height="1.3" />
                {tall && <rect x={x} y="4.6" width="1" height="1.3" />}
                {tall && <rect x={x} y="7" width="1" height="1.3" />}
                {tall && <rect x={x} y="9.4" width="1" height="1.3" />}
            </React.Fragment>
        ))}
    </svg>
);

const renderPanels = [
    { t: 'Ambient Occlusion', check: true },
    { t: 'Bloom', check: true },
    { t: 'Depth of Field', tall: true },
    { t: 'Subsurface Scattering' },
    { t: 'Screen Space Reflections', check: true },
    { t: 'Motion Blur', check: true },
    { t: 'Volumetrics' },
    { t: 'Performance' },
    { t: 'Curves', tall: true },
    { t: 'Shadows', tall: true },
    { t: 'Indirect Lighting', tall: true },
    { t: 'Film', tall: true },
    { t: 'Simplify', check: true },
    { t: 'Grease Pencil' },
    { t: 'Freestyle', check: true },
];

const Panel = ({ t, check, tall }: { t: string; check?: boolean; tall?: boolean }) => (
    <div className="flex h-[25px] shrink-0 items-center rounded-[4px] bg-[#3d3d3d] shadow-[0_1px_0_#2a2a2a]">
        <ChevronRight size={13} strokeWidth={1.5} className="ml-[9px] shrink-0" />
        {check && <span className="ml-px h-[12px] w-[12px] shrink-0 rounded-[2px] bg-[#6e6e6e]" />}
        <span className={`${check ? 'ml-[3px]' : 'ml-px'} whitespace-nowrap`}>{t}</span>
        <Grip tall={tall} />
    </div>
);

const Select = ({ label, value, className = '' }: { label: string; value: string; className?: string }) => (
    <div className={`flex items-center ${className}`}>
        <span className="w-[124px] pr-[10px] text-right">{label}</span>
        <div className="flex h-[18px] w-[157px] items-center justify-between rounded-[3px] bg-[#383838] px-[7px] shadow-[0_1px_0_#2a2a2a]">
            {value}
            <ChevronDown size={11} strokeWidth={2} className="-mr-[5px]" />
        </div>
    </div>
);

const Slider = ({ label, value, fill }: { label: string; value: string; fill: string }) => (
    <div className="flex items-center">
        <span className="w-[124px] pr-[10px] text-right">{label}</span>
        <div className="relative flex h-[18px] w-[157px] items-center justify-center overflow-hidden rounded-[3px] bg-[#838383]">
            <span className={`absolute inset-y-0 left-0 bg-[#dcdcdc] ${fill}`} />
            <span className="relative">{value}</span>
        </div>
    </div>
);

const tabIcons: { y: string; art: React.ReactNode }[] = [
    {
        y: 'h-[45px]',
        art: (
            <svg width="16" height="16" viewBox="0 0 16 16" fill="#cfcfcf">
                <path d="M11 1v3h2V1c2 .5 2.5 3 1 4.5V15h-2.5V5.5C10 4 9.5 1.5 11 1z" />
                <path d="M4 1h2v6H4zM3 8h4v7H3z" />
            </svg>
        ),
    },
    {
        y: 'h-[25px] bg-[#303030] rounded-l-[5px]',
        art: (
            <svg width="16" height="16" viewBox="0 0 16 16" fill="#bdbdbd">
                <path d="M1 4h14v11H1zM3 6v3h6V6zM11 6v1h2V6zM3 11v1h10v-1z" fillRule="evenodd" />
                <path d="M5 1h6v3H9.5V2.5h-3V4H5z" />
            </svg>
        ),
    },
    {
        y: 'h-[28px]',
        art: (
            <svg width="16" height="16" viewBox="0 0 16 16" fill="#bdbdbd">
                <path d="M1 2h14v3H1zM3 6h10v9H3z" />
                <path d="M5 13l3-4 3 4z" fill="#333" />
            </svg>
        ),
    },
    { y: 'h-[29px]', art: <LayerIcon size={16} /> },
    { y: 'h-[28px]', art: <SceneIcon color="#bdbdbd" /> },
    {
        y: 'h-[28px] bg-[#4a4a4a] rounded-l-[5px]',
        art: <WorldIcon color="#cc5560" />,
    },
    { y: 'h-[45px]', art: <BoxIcon color="#bdbdbd" size={15} /> },
    {
        y: 'h-[28px]',
        art: (
            <svg width="16" height="16" viewBox="0 0 16 16" fill="none" stroke="#b87a45">
                <rect x="4" y="4" width="8" height="8" fill="#c87c3e" stroke="none" />
                <path d="M1 4V1h3M12 1h3v3M15 12v3h-3M4 15H1v-3" />
            </svg>
        ),
    },
    { y: 'h-[28px]', art: <Wrench size={16} fill="#6f9ce0" strokeWidth={1.5} className="text-[#6f9ce0]" /> },
    {
        y: 'h-[28px]',
        art: (
            <svg width="16" height="16" viewBox="0 0 16 16" fill="#6f9ce0" stroke="#6f9ce0">
                <path d="M3 3l10 1M3 3l1 10M3 3l10 10" fill="none" />
                <circle cx="3" cy="3" r="1.5" />
                <circle cx="13" cy="4" r="1.5" />
                <circle cx="13" cy="13" r="1.5" />
            </svg>
        ),
    },
    {
        y: 'h-[28px]',
        art: (
            <svg width="16" height="16" viewBox="0 0 16 16" fill="none" stroke="#6f9ce0" strokeWidth="1.3">
                <path d="M11 2.5A6.5 6.5 0 1 0 13.5 6" />
                <circle cx="7.5" cy="8.5" r="2.5" fill="#6f9ce0" />
                <circle cx="13" cy="3" r="1.8" fill="#6f9ce0" stroke="none" />
            </svg>
        ),
    },
    {
        y: 'h-[28px]',
        art: (
            <svg width="16" height="16" viewBox="0 0 16 16" fill="none" stroke="#6f9ce0" strokeWidth="1.3">
                <ellipse cx="8" cy="8" rx="7.5" ry="4.5" transform="rotate(-40 8 8)" />
                <circle cx="6.5" cy="9.5" r="3" />
                <circle cx="6.5" cy="9.5" r="1" fill="#6f9ce0" />
            </svg>
        ),
    },
    {
        y: 'h-[28px]',
        art: (
            <svg width="16" height="16" viewBox="0 0 16 16" fill="none" stroke="#20c090" strokeWidth="1.2">
                <path d="M3 3h10L8 13z" />
                <rect x="1.5" y="1.5" width="3" height="3" fill="#1d1d1d" />
                <rect x="11.5" y="1.5" width="3" height="3" fill="#1d1d1d" />
                <rect x="6.5" y="11.5" width="3" height="3" fill="#1d1d1d" />
            </svg>
        ),
    },
    {
        y: 'h-[27px]',
        art: (
            <svg width="16" height="16" viewBox="0 0 16 16">
                <circle cx="8" cy="8" r="7" fill="#b85058" />
                <path d="M8 8V1a7 7 0 0 1 0 14z" fill="#8c3c44" />
                <path d="M8 8l-7 1a7 7 0 0 0 7 6z" fill="#222" />
            </svg>
        ),
    },
];

const GhostChev = ({ className }: { className: string }) => (
    <ChevronRight size={13} strokeWidth={1.5} className={`absolute text-[#eee] ${className}`} />
);

// the World tab bleeding through the Render tab
const GhostWorld = () => (
    <div className={`pointer-events-none absolute inset-0 text-[#eee] ${shadow}`}>
        <span className="absolute -top-[4px] left-[130px] h-[12px] w-[12px] rounded-[2px] bg-[#bdbdbd]" />
        <span className="absolute -top-[7px] left-[147px] leading-[18px]">Viewport Denoising</span>

        <span className="absolute left-[10px] top-[10px]"><SceneIcon color="#f0f0f0" /></span>
        <span className="absolute left-[34px] top-[9px] leading-[18px]">Scene</span>
        <ChevronRight size={12} strokeWidth={1.5} className="absolute left-[81px] top-[12px]" />
        <span className="absolute left-[99px] top-[10px]"><WorldIcon /></span>
        <span className="absolute left-[122px] top-[9px] leading-[18px]">World</span>
        <Pin size={14} strokeWidth={1.2} className="absolute left-[280px] top-[11px] rotate-45" />

        <div className="absolute left-[10px] top-[45px] flex h-[19px] w-[285px] items-center overflow-hidden rounded-[3px] bg-white/10">
            <span className="ml-[2px] flex w-[26px]"><WorldIcon size={16} /></span>
            <Chev className="-ml-[3px] text-[#eee]" />
            <span className="ml-[6px] flex h-full w-[195px] items-center bg-white/20 pl-[1px] text-[#f2f2f2]">World</span>
            <Shield size={14} strokeWidth={1.2} className="ml-[5px]" />
            <Copy size={13} strokeWidth={1.2} className="ml-[7px]" />
            <X size={14} strokeWidth={2} className="ml-[7px]" />
        </div>

        <ChevronRight size={13} strokeWidth={1.5} className="absolute left-[12px] top-[80px] rotate-90" />
        <span className="absolute left-[30px] top-[78px] leading-[18px]">Surface</span>

        <div className="absolute left-[17px] top-[108px] flex h-[18px] w-[270px] items-center rounded-[3px] bg-[#c5d5ea]/85">
            <span className="ml-[4px]"><BoxIcon color="#f4f6fa" /></span>
            <span className="ml-[104px] text-[#f2f4f8]">Use Nodes</span>
        </div>

        <span className="absolute left-[61px] top-[144px] w-[52px] text-right leading-[18px]">Surface</span>
        <div className="absolute left-[122px] top-[144px] flex h-[18px] w-[145px] items-center rounded-[3px] bg-[#444]/80 pl-[7px]">
            <span className="h-[7px] w-[7px] rounded-full border border-[#cfe0cf] bg-[#eef]" />
            <span className="ml-[8px]">Background</span>
        </div>

        <span className="absolute left-[61px] top-[180px] w-[52px] text-right leading-[18px]">Color</span>
        <div className="absolute left-[122px] top-[180px] flex h-[18px] w-[145px] items-center overflow-hidden rounded-[3px] bg-[#444]/80 pl-[7px]">
            <span className="h-[7px] w-[7px] rounded-full border border-[#dde0b0] bg-[#eee]" />
            <span className="ml-[7px] h-full flex-1 bg-white" />
        </div>
        <span className="absolute left-[276px] top-[187px] h-[4px] w-[4px] bg-white" />

        <span className="absolute left-[51px] top-[205px] w-[62px] text-right leading-[18px]">Strength</span>
        <div className="absolute left-[122px] top-[205px] flex h-[18px] w-[145px] items-center overflow-hidden rounded-[3px] bg-[#444]/80 pl-[7px]">
            <span className="h-[7px] w-[7px] rounded-full bg-[#f4f4f4]" />
            <span className="ml-[7px] flex h-full flex-1 items-center justify-center bg-[#777]">0.000</span>
        </div>
        <span className="absolute left-[276px] top-[212px] h-[4px] w-[4px] bg-white" />

        <GhostChev className="left-[16px] top-[241px]" />
        <span className="absolute left-[31px] top-[238px] leading-[18px]">Volume</span>
        <GhostChev className="left-[16px] top-[268px]" />
        <span className="absolute left-[31px] top-[265px] leading-[18px]">Mist Pass</span>
        <GhostChev className="left-[16px] top-[295px]" />
        <span className="absolute left-[31px] top-[292px] leading-[18px]">Viewport Display</span>
        <GhostChev className="left-[16px] top-[322px]" />
        <span className="absolute left-[31px] top-[319px] leading-[18px]">Custom Properties</span>
    </div>
);

const Properties = () => (
    <div className="mt-[2px] flex min-h-0 flex-1 flex-col overflow-hidden rounded-t-[5px] bg-[#282828] font-['Inter',sans-serif] text-[11px] text-[#e6e6e6]">
        <div className="flex h-[26px] shrink-0 items-center pl-[7px] pr-[9px]">
            <div className="flex h-[19px] w-[30px] items-center justify-center gap-px rounded-[4px] border border-[#3a3a3a]">
                <svg width="15" height="13" viewBox="0 0 15 13" fill="#ddd">
                    <path d="M4 0h7a3 3 0 0 1 0 6H4a3 3 0 0 1 0-6zM10.5 1.5a1.5 1.5 0 1 0 0 3 1.5 1.5 0 0 0 0-3zM4 7h7a3 3 0 0 1 0 6H4a3 3 0 0 1 0-6zM4.5 8.5a1.5 1.5 0 1 0 0 3 1.5 1.5 0 0 0 0-3z" fillRule="evenodd" />
                </svg>
                <Caret />
            </div>
            <div className="ml-[71px] flex h-[19px] w-[114px] items-center rounded-[4px] border border-[#222] bg-[#1f1f1f] pl-[4px] text-[#ddd]">
                <Search size={14} strokeWidth={1.5} className="-scale-x-100" />
            </div>
            <div className="ml-auto flex h-[19px] w-[19px] items-center justify-center rounded-[4px] border border-[#3a3a3a]"><Caret /></div>
        </div>
        <div className="flex min-h-0 flex-1">
            <div className="w-[26px] shrink-0 bg-[#1d1d1d]">
                {tabIcons.map((tab, i) => (
                    <div key={i} className={`flex items-center justify-center ${tab.y}`}>{tab.art}</div>
                ))}
            </div>
            <div className={`relative flex min-w-0 flex-1 flex-col gap-[2px] overflow-hidden bg-[#303030] pl-[8px] pr-[8px] pt-[23px] ${shadow}`}>
                {renderPanels.map((p) => (
                    <Panel key={p.t} t={p.t} check={p.check} tall={p.tall} />
                ))}
                <div className="flex shrink-0 flex-1 flex-col rounded-t-[4px] bg-[#484848]">
                    <div className="flex h-[25px] shrink-0 items-center">
                        <ChevronDown size={13} strokeWidth={1.5} className="ml-[9px] shrink-0" />
                        <span className="ml-px">Color Management</span>
                        <Grip />
                    </div>
                    <div className="flex flex-col pt-[8px]">
                        <Select label="Display Device" value="sRGB" />
                        <Select label="View Transform" value="Standard" className="mt-[12px]" />
                        <div className="mt-[4px] flex flex-col gap-[4px]">
                            <Select label="Look" value="None" />
                            <Slider label="Exposure" value="0.000" fill="w-[49%]" />
                            <Slider label="Gamma" value="1.000" fill="w-[18.5%]" />
                        </div>
                        <Select label="Sequencer" value="sRGB" className="mt-[12px]" />
                        <div className="ml-[22px] mt-[13px] flex items-center">
                            <ChevronRight size={13} strokeWidth={1.5} />
                            <span className="ml-[3px]">Display</span>
                        </div>
                    </div>
                </div>
                <GhostWorld />
                <div className="absolute right-[3px] top-[132px] h-[465px] w-[3px] rounded-full bg-[#4b4b4b]" />
            </div>
        </div>
    </div>
);

// ---- windows taskbar ----
const taskIcons: { k: string; on?: boolean; active?: boolean; art: React.ReactNode }[] = [
    {
        k: 'chrome',
        on: true,
        art: (
            <svg width="24" height="24" viewBox="0 0 24 24">
                <circle cx="12" cy="12" r="11" fill="#dd4b3e" />
                <path d="M12 12L2.5 6.5A11 11 0 0 0 12 23z" fill="#1e9e50" />
                <path d="M12 12l9.5-5.5A11 11 0 0 1 12 23z" fill="#f5c518" />
                <circle cx="12" cy="12" r="5" fill="#4688f1" stroke="#fff" strokeWidth="1.5" />
                <circle cx="17.5" cy="17.5" r="6" fill="#e02020" />
                <path d="M15.5 14.5v6l5-3z" fill="#fff" />
            </svg>
        ),
    },
    {
        k: 'files',
        on: true,
        art: (
            <svg width="24" height="24" viewBox="0 0 24 24">
                <path d="M2 3h8l2 3h10v16H2z" fill="#f0c44c" />
                <rect x="2" y="9" width="20" height="13" fill="#f8d66a" />
                <rect x="8" y="15" width="8" height="7" fill="#2f8fd8" />
                <rect x="10.5" y="18" width="3" height="4" fill="#f8d66a" />
            </svg>
        ),
    },
    {
        k: 'record',
        art: (
            <svg width="24" height="26" viewBox="0 0 24 26">
                <defs>
                    <radialGradient id="rec" cx=".4" cy=".3" r=".8">
                        <stop offset="0" stopColor="#ff3a2a" />
                        <stop offset="1" stopColor="#7a0e08" />
                    </radialGradient>
                </defs>
                <ellipse cx="12" cy="13" rx="11.5" ry="13" fill="url(#rec)" />
            </svg>
        ),
    },
    {
        k: 'spotify',
        on: true,
        art: (
            <svg width="24" height="24" viewBox="0 0 24 24" fill="none">
                <circle cx="12" cy="12" r="12" fill="#1ed760" />
                <path d="M5 8.5c5-1.5 10-1 14.5 1.5M6 12.5c4-1 8.5-.7 12 1.5M7 16c3.5-1 7-.6 10 1" stroke="#111" strokeWidth="2" strokeLinecap="round" />
            </svg>
        ),
    },
    {
        k: 'vscode',
        on: true,
        art: (
            <svg width="24" height="24" viewBox="0 0 24 24">
                <path d="M17 1l6 3v16l-6 3L6.5 14 2 17.5l-2-1.5v-8L2 6.5 6.5 10z" fill="#1f8ad2" />
                <path d="M17 6.5L9.5 12l7.5 5.5z" fill="#20364a" />
                <path d="M17 1l6 3v16l-6 3z" fill="#2ba6f0" />
            </svg>
        ),
    },
    {
        k: 'blender',
        on: true,
        active: true,
        art: <BlenderLogo size={26} />,
    },
    {
        k: 'clion',
        on: true,
        art: (
            <svg width="24" height="24" viewBox="0 0 24 24">
                <rect width="24" height="24" fill="#1e6fa8" />
                <rect x="7" y="7" width="17" height="17" fill="#0d3e73" />
                <path d="M0 7h24M8 0v24M16 0v7" stroke="#4aa8d8" />
                <text x="12" y="21" fontFamily="Liberation Mono" fontSize="14" fill="#fff">C</text>
            </svg>
        ),
    },
    {
        k: 'gimp',
        on: true,
        art: (
            <svg width="26" height="26" viewBox="0 0 26 26">
                <path d="M9 6l2-3 3 2 5-1 3-3v8l2 2-3 4H12z" fill="#8c8c8c" />
                <circle cx="15" cy="8" r="1.5" fill="#222" />
                <rect x="1" y="13" width="19" height="12" fill="#fff" />
                <path d="M20 15h4v6l-4 3z" fill="#777" />
            </svg>
        ),
    },
    {
        k: 'calc',
        on: true,
        art: (
            <svg width="20" height="26" viewBox="0 0 20 26">
                <rect width="20" height="26" rx="2" fill="#5c6c78" />
                <rect x="2" y="2" width="16" height="5" fill="#5fd0f0" />
                <g fill="#c8d4dc">
                    <rect x="2" y="9" width="4.5" height="4" />
                    <rect x="7.8" y="9" width="4.5" height="4" />
                    <rect x="13.5" y="9" width="4.5" height="4" />
                    <rect x="2" y="14.5" width="4.5" height="4" />
                    <rect x="7.8" y="14.5" width="4.5" height="4" />
                    <rect x="2" y="20" width="4.5" height="4" />
                    <rect x="7.8" y="20" width="4.5" height="4" />
                </g>
                <rect x="13.5" y="14.5" width="4.5" height="9.5" fill="#12334f" />
            </svg>
        ),
    },
];

const Taskbar = () => (
    <div className="flex h-[40px] shrink-0 items-center bg-gradient-to-r from-[#1e3548] via-[#20394d] to-[#1c3349] font-['Open_Sans',sans-serif] text-white">
        <div className="flex w-[48px] justify-center">
            <svg width="18" height="18" viewBox="0 0 18 18" fill="#fff">
                <path d="M0 2.5l7.5-1v7H0zM8.5 1.3L18 0v8.5H8.5zM0 9.5h7.5v7L0 15.5zM8.5 9.5H18V18l-9.5-1.3z" />
            </svg>
        </div>
        <div className="flex w-[48px] justify-center">
            <svg width="18" height="18" viewBox="0 0 18 18" fill="none" stroke="#eee">
                <rect x="3.5" y="5.5" width="11" height="7" />
                <path d="M1 2.5h7M11 2.5h3M1 15.5h7M11 15.5h3M16 3v2M16 13v2" />
                <rect x="13" y="7.5" width="3.5" height="3" />
            </svg>
        </div>
        <div className="ml-[2px] flex h-full">
            {taskIcons.map((t) => (
                <div key={t.k} className={`relative flex h-full w-[49px] items-center justify-center ${t.active ? 'bg-white/20' : ''}`}>
                    {t.art}
                    {t.on && <span className={`absolute bottom-0 h-[2px] bg-[#76b9ed] ${t.active ? 'inset-x-0' : 'inset-x-[4px]'}`} />}
                </div>
            ))}
        </div>
        <div className="ml-auto flex h-full items-center">
            <span className="relative flex w-[24px] justify-center">
                <svg width="25" height="15" viewBox="0 0 25 15">
                    <path d="M5 15a5 5 0 0 1-.5-10A7 7 0 0 1 17 3.5 5.5 5.5 0 0 1 20 15z" fill="#bcd6f6" />
                </svg>
                <span className="absolute -right-[1px] -top-[7px] flex h-[12px] w-[12px] items-center justify-center rounded-full bg-[#d9221c] text-[8px] leading-none">1</span>
            </span>
            <span className="ml-[8px] text-[13px]">21°C</span>
            <span className="ml-[10px] text-[13px]">Nublado</span>
            <ChevronUp size={16} strokeWidth={1.5} className="ml-[22px]" />
            <svg width="17" height="11" viewBox="0 0 17 11" className="ml-[8px]" fill="#dde3ea">
                <path d="M4 11a4 4 0 0 1-.5-8A5.5 5.5 0 0 1 13 4a3.5 3.5 0 0 1 .5 7z" />
            </svg>
            <Wifi size={16} strokeWidth={1.5} className="ml-[9px]" />
            <Volume1 size={16} strokeWidth={1.5} className="ml-[7px]" />
            <span className="ml-[10px] text-[12px]">ESP</span>
            <div className="ml-[12px] flex w-[60px] flex-col items-center text-[12px] leading-[19px]">
                <span>16:43</span>
                <span>5/5/2024</span>
            </div>
            <span className="relative ml-[11px] flex w-[24px] items-center justify-center">
                <svg width="16" height="14" viewBox="0 0 16 14">
                    <path d="M0 0h16v11H9l-3 3v-3H0z" fill="#fff" />
                    <path d="M3 3.5h10M3 6h10M3 8.5h7" stroke="#20394d" />
                </svg>
                <span className="absolute -bottom-[8px] -right-[3px] flex h-[16px] w-[16px] items-center justify-center rounded-full border border-[#777] bg-[#333] text-[10px]">5</span>
            </span>
            <span className="ml-[16px] mr-[3px] h-full w-px bg-[#5a6a78]" />
        </div>
    </div>
);

const Mouse = ({ side }: { side: 'l' | 'm' | 'r' }) => (
    <svg width="10" height="16" viewBox="0 0 10 16" fill="none" stroke="#aaa">
        <rect x=".5" y=".5" width="9" height="15" rx="4" />
        {side === 'l' && <path d="M1 6V2.5L4.5 1v5z" fill="#ddd" stroke="none" />}
        {side === 'm' && <rect x="4" y="3" width="2" height="4" fill="#ddd" stroke="none" />}
        {side === 'r' && <path d="M9 6V2.5L5.5 1v5z" fill="#ddd" stroke="none" />}
    </svg>
);

const StatusBar = () => (
    <div className="flex h-[20px] shrink-0 items-center bg-[#181818] pl-[12px] pr-[12px] font-['Inter',sans-serif] text-[11px] text-[#8f8f8f]">
        <span className="flex w-[212px] items-center gap-[12px]"><Mouse side="l" />Set 3D Cursor</span>
        <span className="flex w-[211px] items-center gap-[11px]"><Mouse side="m" />Rotate View</span>
        <span className="flex items-center gap-[11px]"><Mouse side="r" />Select</span>
        <span className="ml-auto">4.0.2</span>
    </div>
);

const App: React.FC = () => (
    <div className="flex h-[1080px] w-[1920px] flex-col overflow-hidden bg-[#181818]">
        <TitleBar />
        <TopBar />
        <div className="flex min-h-0 flex-1">
            <div className="flex w-[1585px] shrink-0 flex-col">
                <div className="relative flex h-[894px] shrink-0 flex-col overflow-hidden rounded-[5px] bg-white">
                    <Scene3D />
                    <div className="relative flex flex-col">
                        <ViewportHeader />
                        <ToolSettings />
                    </div>
                    <Toolbar />
                    <span className="absolute inset-y-0 left-0 w-px bg-[#888]" />
                    <span className="absolute left-[65px] top-[59px] font-['Inter',sans-serif] text-[10.5px] leading-[16px] text-[#dcdcdc]">User Perspective</span>
                    <span className="absolute left-[65px] top-[77px] font-['Inter',sans-serif] text-[10.5px] leading-[16px] text-[#dcdcdc]">(1) Cube</span>
                </div>
                <Timeline />
            </div>
            <div className="ml-[3px] flex min-w-0 flex-1 flex-col">
                <Outliner />
                <Properties />
            </div>
        </div>
        <StatusBar />
        <Taskbar />
    </div>
);

export default App;
